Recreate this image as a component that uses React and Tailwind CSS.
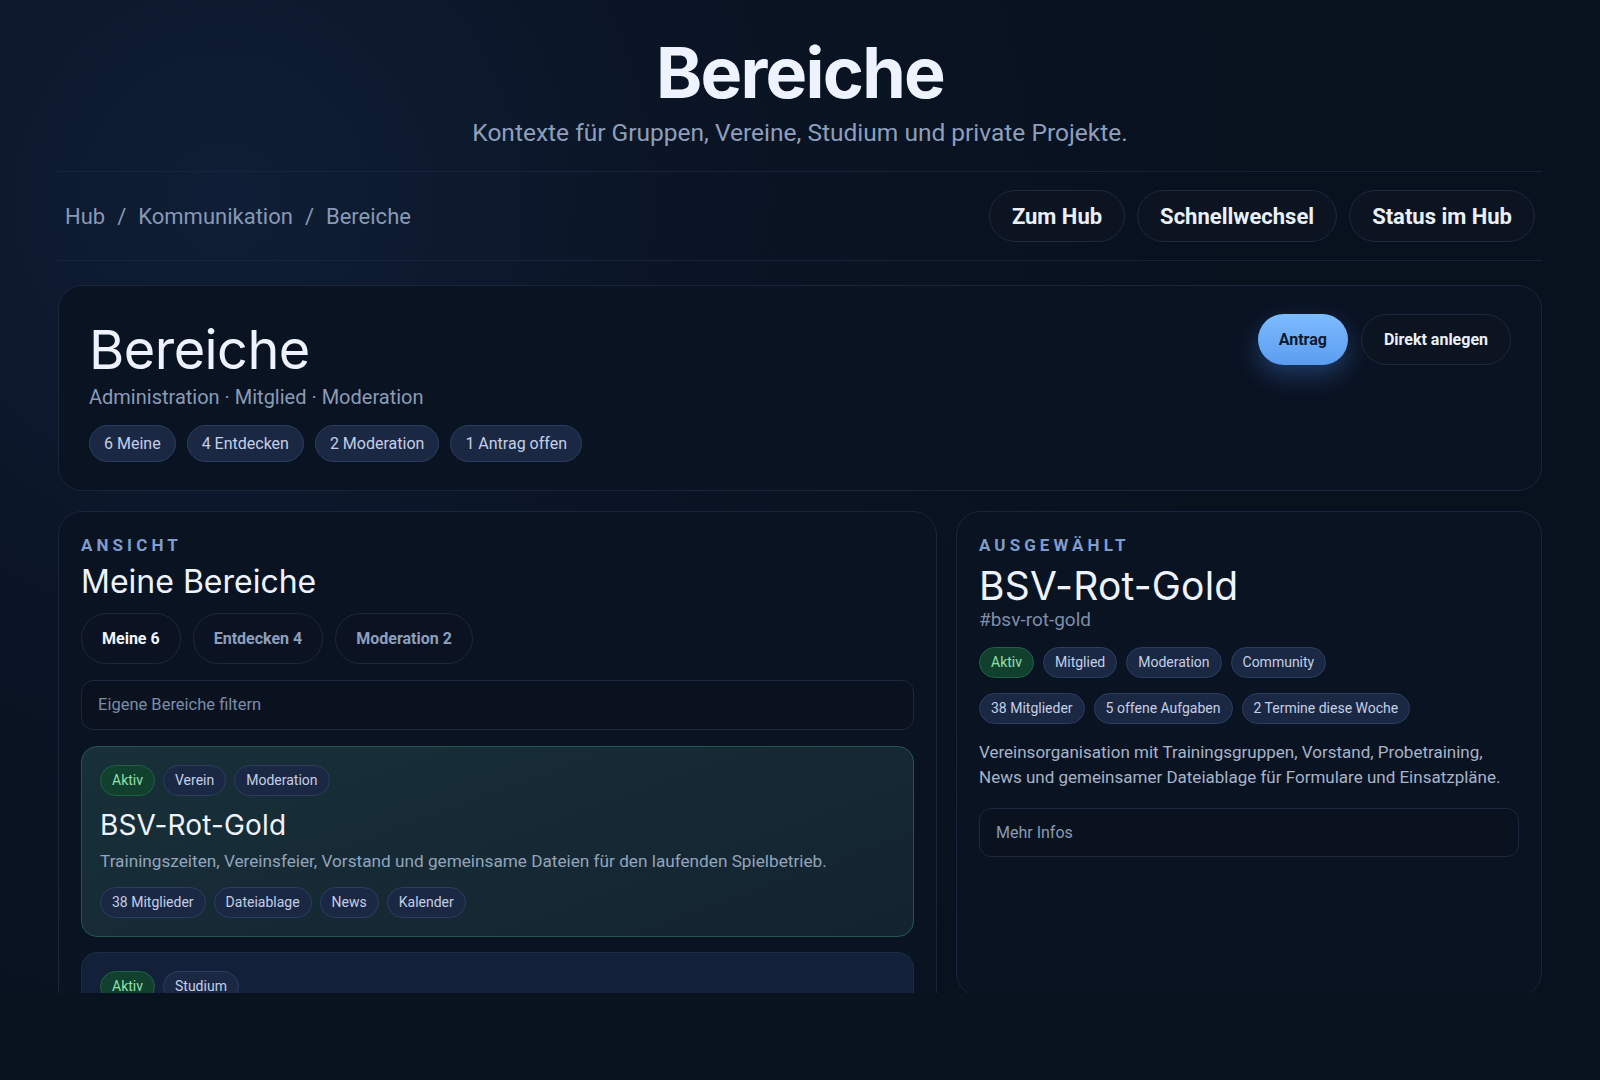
import { useState } from "react";

const sans = { fontFamily: "Roboto, 'Noto Sans', sans-serif" };
const display = { fontFamily: "Inter, 'Noto Sans', sans-serif" };

function Chip({ children, tone = "blue", size = "md" }) {
  const tones = {
    blue: "bg-[#1b2844] border-[#2c3d60] text-[#c3cfe6]",
    green: "bg-[#12402f] border-[#1e6146] text-[#8ee0ae]",
  };
  const sizes = {
    md: "h-[37px] px-[14px] text-[16px]",
    sm: "h-[31px] px-[11px] text-[14px]",
  };
  return (
    <span
      className={`inline-flex items-center rounded-full border ${tones[tone]} ${sizes[size]}`}
    >
      {children}
    </span>
  );
}

function Eyebrow({ children }) {
  return (
    <div className="text-[17px] leading-[22px] font-bold tracking-[0.24em] text-[#7f9dcc]">
      {children}
    </div>
  );
}

const cards = [
  {
    tags: [["Aktiv", "green"], ["Verein"], ["Moderation"]],
    name: "BSV-Rot-Gold",
    desc: "Trainingszeiten, Vereinsfeier, Vorstand und gemeinsame Dateien für den laufenden Spielbetrieb.",
    stats: ["38 Mitglieder", "Dateiablage", "News", "Kalender"],
    selected: true,
  },
  {
    tags: [["Aktiv", "green"], ["Studium"]],
    name: "Studiengruppe Informatik",
    desc: "Lerngruppen, Skripte und Termine für das laufende Semester.",
    stats: ["24 Mitglieder", "Dateiablage", "Kalender"],
  },
];

export default function App() {
  const [tab, setTab] = useState("meine");
  const tabs = [
    ["meine", "Meine 6"],
    ["entdecken", "Entdecken 4"],
    ["moderation", "Moderation 2"],
  ];

  return (
    <div className="min-h-[1080px] bg-[#09121f]" style={sans}>
      <div className="h-[993px] overflow-hidden bg-[radial-gradient(circle_at_14%_20%,#0f1e36_0%,#0a1424_30%,#08111e_65%),linear-gradient(90deg,#08111e_85%,#0b182b_100%)]">
        <div className="px-[58px]">
          {/* header */}
          <header className="pt-[38px] pb-[23px] text-center">
            <h1
              className="text-[70px] leading-none font-bold tracking-tight text-[#eef3ff]"
              style={display}
            >
              Bereiche
            </h1>
            <p className="mt-[10px] text-[24.5px] leading-[30px] text-[#8d9fbc]">
              Kontexte für Gruppen, Vereine, Studium und private Projekte.
            </p>
          </header>

          {/* breadcrumb bar */}
          <nav className="flex items-center justify-between border-y border-[#17233a] py-[18px] pl-[7px] pr-[7px]">
            <div className="flex items-center gap-[12px] text-[22px] text-[#8799b6]">
              <span>Hub</span>
              <span>/</span>
              <span>Kommunikation</span>
              <span>/</span>
              <span>Bereiche</span>
            </div>
            <div className="flex items-center gap-[12px]">
              {["Zum Hub", "Schnellwechsel", "Status im Hub"].map((l) => (
                <button
                  key={l}
                  className="h-[52px] px-[22px] rounded-full border border-[#1c283d] bg-[#0c1422] text-[22px] font-bold text-[#eaf0fb]"
                >
                  {l}
                </button>
              ))}
            </div>
          </nav>

          {/* hero card */}
          <section className="mt-[24px] flex items-start justify-between rounded-[24px] border border-[#18253b] bg-[#0a1322] p-[28px] pl-[30px] pr-[30px]">
            <div className="pt-[9px]">
              <h2
                className="text-[54px] leading-none font-normal tracking-[-0.01em] text-[#eef3ff]"
                style={display}
              >
                Bereiche
              </h2>
              <p className="mt-[6px] text-[20px] leading-[28px] text-[#8a9bb6]">
                Administration · Mitglied · Moderation
              </p>
              <div className="mt-[14px] flex gap-[11px]">
                <Chip>6 Meine</Chip>
                <Chip>4 Entdecken</Chip>
                <Chip>2 Moderation</Chip>
                <Chip>1 Antrag offen</Chip>
              </div>
            </div>
            <div className="flex items-center gap-[13px]">
              <button className="h-[51px] px-[21px] rounded-full bg-[linear-gradient(180deg,#7dbcff,#5b9cf0)] text-[16px] font-bold text-[#0d1a2e] shadow-[0_10px_24px_rgba(80,150,255,0.3)]">
                Antrag
              </button>
              <button className="h-[51px] px-[22px] rounded-full border border-[#1c283d] bg-[#0c1422] text-[16px] font-bold text-[#eaf0fb]">
                Direkt anlegen
              </button>
            </div>
          </section>

          {/* lower grid */}
          <div className="mt-[20px] grid grid-cols-[1.5fr_1fr] gap-[19px] items-start">
            {/* list panel */}
            <section className="rounded-[24px] border border-[#18253b] bg-[#0a1322] p-[22px]">
              <Eyebrow>ANSICHT</Eyebrow>
              <h3
                className="mt-[7px] text-[32px] leading-[38px] font-normal text-[#eef3ff]"
                style={display}
              >
                Meine Bereiche
              </h3>
              <div className="mt-[12px] flex gap-[12px]">
                {tabs.map(([id, label]) => (
                  <button
                    key={id}
                    onClick={() => setTab(id)}
                    className={`h-[51px] px-[20px] rounded-full border border-[#1c283d] bg-[#0b1322] text-[16px] font-bold ${
                      tab === id ? "text-[#f1f5fd]" : "text-[#8d9fbc]"
                    }`}
                  >
                    {label}
                  </button>
                ))}
              </div>
              <div className="mt-[16px] h-[50px] flex items-center rounded-[12px] border border-[#1c283d] bg-[#0a1220] px-[16px] text-[16.5px] text-[#7b8ca7]">
                Eigene Bereiche filtern
              </div>

              <div className="mt-[16px] flex flex-col gap-[15px]">
                {cards.map((c) => (
                  <article
                    key={c.name}
                    className={`rounded-[16px] border px-[18px] pt-[18px] pb-[18px] ${
                      c.selected
                        ? "border-[#27564f] bg-[linear-gradient(160deg,#183039,#13232f)]"
                        : "border-[#1d2c45] bg-[#13203a]"
                    }`}
                  >
                    <div className="flex gap-[8px]">
                      {c.tags.map(([t, tone]) => (
                        <Chip key={t} tone={tone} size="sm">
                          {t}
                        </Chip>
                      ))}
                    </div>
                    <h4
                      className="mt-[12px] text-[28px] leading-[34px] tracking-[0.005em] text-[#eef3ff]"
                      style={display}
                    >
                      {c.name}
                    </h4>
                    <p className="mt-[7px] text-[17.2px] leading-[24px] text-[#93a4bd]">
                      {c.desc}
                    </p>
                    <div className="mt-[14px] flex gap-[8px]">
                      {c.stats.map((s) => (
                        <Chip key={s} size="sm">
                          {s}
                        </Chip>
                      ))}
                    </div>
                  </article>
                ))}
              </div>
            </section>

            {/* detail panel */}
            <section className="h-[486px] rounded-[24px] border border-[#18253b] bg-[#0a1322] p-[22px]">
              <Eyebrow>AUSGEWÄHLT</Eyebrow>
              <h3
                className="mt-[10px] text-[39px] leading-none font-normal tracking-[0.005em] text-[#eef3ff]"
                style={display}
              >
                BSV-Rot-Gold
              </h3>
              <p className="mt-[2px] text-[19px] leading-[26px] text-[#7d8ea8]">#bsv-rot-gold</p>
              <div className="mt-[14px] flex gap-[9px]">
                <Chip tone="green" size="sm">Aktiv</Chip>
                <Chip size="sm">Mitglied</Chip>
                <Chip size="sm">Moderation</Chip>
                <Chip size="sm">Community</Chip>
              </div>
              <div className="mt-[15px] flex gap-[9px]">
                <Chip size="sm">38 Mitglieder</Chip>
                <Chip size="sm">5 offene Aufgaben</Chip>
                <Chip size="sm">2 Termine diese Woche</Chip>
              </div>
              <p className="mt-[16px] text-[17px] leading-[25px] text-[#a6b3c8]">
                Vereinsorganisation mit Trainingsgruppen, Vorstand, Probetraining,
                News und gemeinsamer Dateiablage für Formulare und Einsatzpläne.
              </p>
              <div className="mt-[18px] h-[49px] flex items-center rounded-[12px] border border-[#1c283d] bg-[#0a1220] px-[16px] text-[16px] text-[#8a9ab2]">
                Mehr Infos
              </div>
            </section>
          </div>
        </div>
      </div>
    </div>
  );
}
